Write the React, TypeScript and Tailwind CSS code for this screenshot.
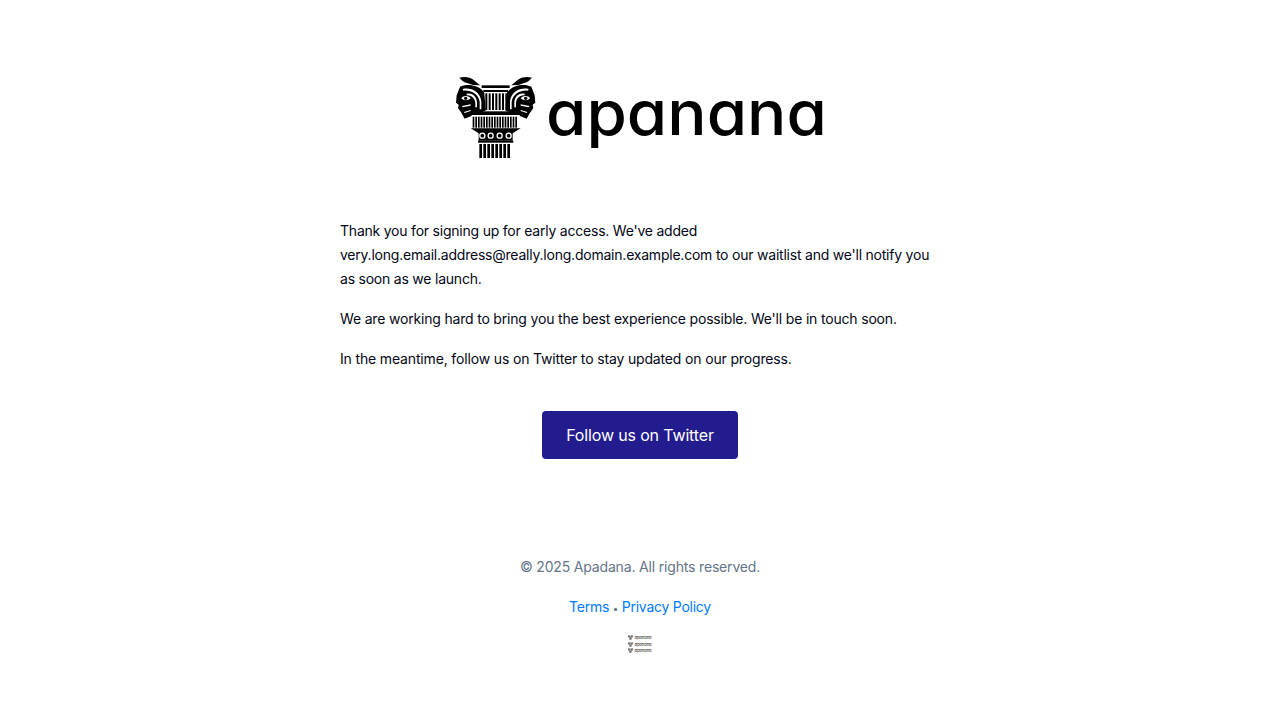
const LINK = "text-[#007bff]"

// head and volute for the left side, coordinates taken from a 3x crop. mirrored for the right
function Volute() {
  return (
    <g>
      <path d="M28 23 C44 18 62 22 71 30 L90 46 L69 45 C57 41 44 38 38 33 Z" fill="#000" />
      <path d="M30 50 C50 41 86 44 103 68 L107 122 L90 128 L68 130 L64 138 L44 146 L34 128 L24 114 L26 104 L18 98 L20 76 Z" fill="#000" />
      <path d="M38 57 C62 51 90 64 94 94 L94 118 L89 118 L89 95 C85 71 62 60 40 62 Z" fill="#fff" />
      <path d="M50 71 C68 67 80 80 81 98 L81 112 L76 112 L76 98 C74 84 64 75 50 76 Z" fill="#fff" />
      <path d="M34 85 C39 76 55 76 62 85 C55 93 39 93 34 85 Z" fill="#fff" />
      <circle cx="47" cy="85" r="5" fill="#000" />
      <path d="M36 108 L62 103 L62 107 L38 112 Z" fill="#fff" />
      <path d="M42 126 L62 120 L62 123 L44 129 Z" fill="#fff" />
    </g>
  )
}

function ColumnMark({ className }: { className: string }) {
  const neck = [106, 116, 126, 136, 146, 156, 166]
  const flutes = [68, 76, 84, 92, 100, 108, 116, 124, 132, 140, 148, 156, 164, 172, 180, 188, 196]
  const base = [88, 100, 112, 124, 136, 148, 160, 172]
  return (
    <svg viewBox="18 18 240 246" className={className}>
      <Volute />
      <g transform="translate(274 0) scale(-1 1)">
        <Volute />
      </g>
      <rect x="95" y="46" width="84" height="8" fill="#000" />
      <rect x="100" y="60" width="74" height="6" fill="#000" />
      {neck.map((x) => (
        <rect key={x} x={x} y="70" width="6" height="50" fill="#000" />
      ))}
      <rect x="62" y="124" width="150" height="11" fill="#000" />
      {flutes.map((x) => (
        <rect key={x} x={x} y="140" width="5" height="33" fill="#000" />
      ))}
      <path d="M62 175 H212 L188 190 V212 H86 V190 Z" fill="#000" />
      {[97, 122, 149, 176].map((x) => (
        <circle key={x} cx={x} cy="197" r="7.5" fill="none" stroke="#fff" strokeWidth="4" />
      ))}
      <rect x="84" y="212" width="106" height="6" fill="#000" />
      {base.map((x) => (
        <rect key={x} x={x} y="222" width="8" height="42" fill="#000" />
      ))}
    </svg>
  )
}

function Logo() {
  return (
    <div className="flex items-center">
      <ColumnMark className="ml-[1px] mr-[10px] w-[80px] h-[82px]" />
      <span className="w-[279px] mb-[9px] text-[62px] leading-none font-medium text-black origin-left scale-x-[1.055] [font-feature-settings:'cv11']">apanana</span>
    </div>
  )
}

export default function App() {
  return (
    <div className="min-h-screen bg-white font-['Inter',sans-serif] text-sm leading-6 text-[#020617]">
      <div className="w-[600px] mx-auto flex flex-col items-center pt-[76px]">
        <Logo />
        <div className="w-full mt-[61px] flex flex-col gap-4">
          <p className="tracking-[-0.22px]">
            Thank you for signing up for early access. We've added
            very.long.email.address@really.long.domain.example.com to our waitlist and we'll notify you as soon as we launch.
          </p>
          <p className="tracking-[-0.184px]">We are working hard to bring you the best experience possible. We'll be in touch soon.</p>
          <p className="tracking-[-0.155px]">In the meantime, follow us on Twitter to stay updated on our progress.</p>
        </div>
        <a className="mt-10 h-12 px-6 flex items-center rounded bg-[#231c8f] text-white text-base tracking-[-0.15px]">Follow us on Twitter</a>
        <p className="mt-24 text-[#64748b] tracking-[-0.17px]">© 2025 Apadana. All rights reserved.</p>
        <p className="mt-4 text-[#64748b] tracking-[-0.25px]">
          <a className={LINK}>Terms</a> <span className="text-[10px]">•</span> <a className={LINK}>Privacy Policy</a>
        </p>
        <div className="mt-[15px] flex flex-col gap-[1.5px] opacity-80">
          {[0, 1, 2].map((i) => (
            <div key={i} className="flex items-center gap-[1px]">
              <ColumnMark className="w-[5px] h-[5px]" />
              <span className="text-[4px] leading-[5px] font-medium text-black [font-feature-settings:'cv11']">apanana</span>
            </div>
          ))}
        </div>
      </div>
    </div>
  )
}
